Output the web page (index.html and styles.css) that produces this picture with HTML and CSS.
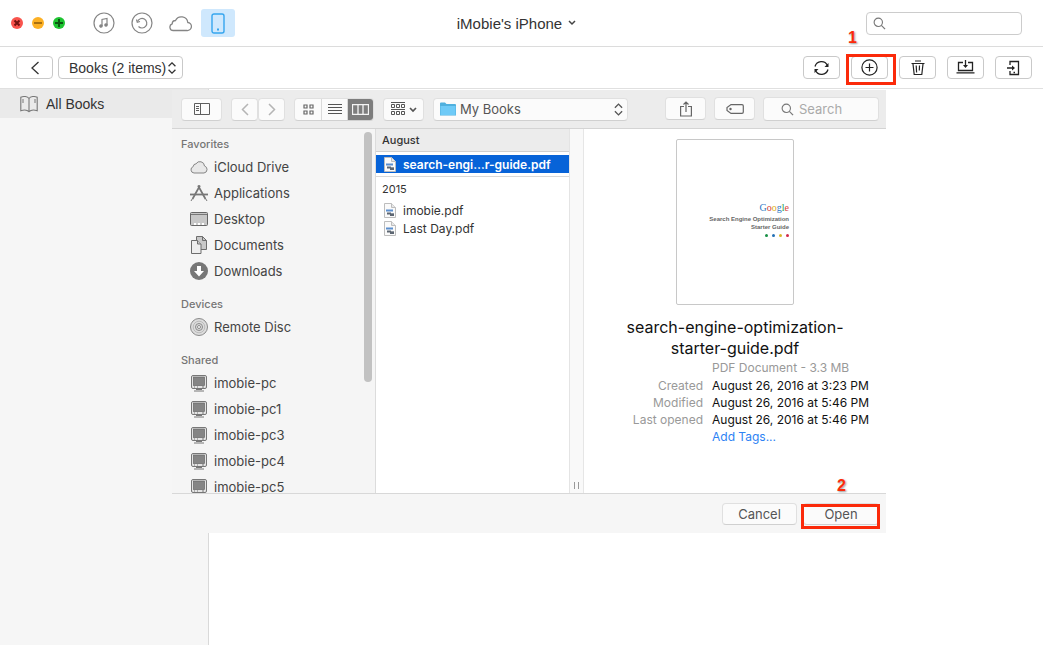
FILE: index.html
```html
<!DOCTYPE html>
<html lang="en">
<head>
<meta charset="utf-8">
<title>iMobie's iPhone</title>
<link rel="stylesheet" href="styles.css">
</head>
<body>
<svg class="defs" aria-hidden="true">
  <symbol id="pc" viewBox="0 0 18 18">
    <rect x="1.5" y="1.5" width="15" height="13" rx="1.5" fill="#e4e4e4" stroke="#777"/>
    <rect x="3.5" y="3" width="11" height="8.5" fill="#858585" stroke="#666" stroke-width=".7"/>
    <path d="M4 13h1M7 13h1M12 13h2" stroke="#777"/>
    <path d="M6 15.5h6M4 17h10" stroke="#777"/>
  </symbol>
  <symbol id="pdf" viewBox="0 0 12 15">
    <path d="M.5.5h7l4 4v10H.5z" fill="#fafafa" stroke="#bdbdbd"/>
    <path d="M7.500.5v4h4" fill="#e8e8e8" stroke="#bdbdbd"/>
    <path d="M2 7.500h7" stroke="#5b8fce" stroke-width="2"/>
    <path d="M3 10.500h4M6 12h4" stroke="#5d6672" stroke-width="2"/>
    <path d="M7 10.500h3" stroke="#8e959d"/>
  </symbol>
  <symbol id="lens" viewBox="0 0 14 14">
    <circle cx="5.700" cy="5.700" r="4.500" fill="none" stroke="#777" stroke-width="1.200"/>
    <path d="M9 9l4 4" stroke="#777" stroke-width="1.300"/>
  </symbol>
  <symbol id="updown" viewBox="0 0 10 14">
    <path d="M1 5l4-4 4 4M1 9l4 4 4-4" fill="none" stroke="currentColor" stroke-width="1.500"/>
  </symbol>
</svg>

<div class="app">
  <header class="titlebar">
    <div class="titlebar-left">
      <div class="lights">
        <button class="light close" aria-label="Close"><svg viewBox="0 0 12 12"><path d="M3.500 3.500l5 5M8.500 3.500l-5 5" stroke="#74120f" stroke-width="2"/></svg></button>
        <button class="light minimize" aria-label="Minimize"><svg viewBox="0 0 12 12"><path d="M2 6h8" stroke="#8d5b0b" stroke-width="1.500"/></svg></button>
        <button class="light maximize" aria-label="Zoom"><svg viewBox="0 0 12 12"><path d="M2 6h8M6 2v8" stroke="#0b5712" stroke-width="2"/></svg></button>
      </div>
      <nav class="modes" aria-label="Sources">
        <button class="mode" aria-label="Music"><svg width="22" height="22" viewBox="0 0 22 22" fill="none" stroke="#858585" stroke-width="1.200"><circle cx="11" cy="11" r="10"/><path d="M9 14V7.500l5-1V13"/><circle cx="8" cy="14" r="1.200" fill="#858585"/><circle cx="13" cy="13" r="1.200" fill="#858585"/></svg></button>
        <button class="mode" aria-label="History"><svg width="22" height="22" viewBox="0 0 22 22" fill="none" stroke="#858585" stroke-width="1.200"><circle cx="11" cy="11" r="10"/><path d="M6.500 9.500a4.800 4.800 0 1 1 1 5"/><path d="M5.500 7.500l.8 2.800 2.700-.8"/></svg></button>
        <button class="mode" aria-label="Cloud"><svg width="24" height="17" viewBox="0 0 24 17" fill="none" stroke="#858585" stroke-width="1.300"><path d="M5.500 15.500h13.500a4 4 0 0 0 .8-8A6.500 6.500 0 0 0 7.500 5.500a3.500 3.500 0 0 0-3.300 3.400A3.400 3.400 0 0 0 5.500 15.500z"/></svg></button>
        <button class="mode active" aria-label="Device"><svg width="14" height="21" viewBox="0 0 14 21" fill="none" stroke="#35a5ee" stroke-width="1.400"><rect x="1" y="1" width="12" height="19" rx="2"/><path d="M6 16.500h2" stroke-width="2"/></svg></button>
      </nav>
    </div>
    <button class="device-name">iMobie's iPhone <svg width="8" height="6" viewBox="0 0 8 6"><path d="M1 1l3 3 3-3" fill="none" stroke="#444" stroke-width="1.500"/></svg></button>
    <label class="field app-search"><svg width="13" height="13"><use href="#lens"/></svg><input type="search" aria-label="Search device"></label>
  </header>

  <div class="toolbar">
    <div class="tools-left">
      <button class="tool" aria-label="Back"><svg width="10" height="14" viewBox="0 0 10 14"><path d="M8.500 1L2 7l6.500 6" fill="none" stroke="#333" stroke-width="1.300"/></svg></button>
      <label class="picker category"><select aria-label="Category"><option>Books (2 items)</option></select><svg width="10" height="12"><use href="#updown"/></svg></label>
    </div>
    <div class="tools-right">
      <button class="tool" aria-label="Refresh"><svg width="17" height="16" viewBox="0 0 17 16" fill="none" stroke="#222" stroke-width="1.300"><path d="M2 6.500a6.700 6.700 0 0 1 12.500-1M15 9.500A6.700 6.700 0 0 1 2.500 10.500"/><path d="M15.500 3v4h-4zM1.500 13V9h4z" fill="#222" stroke="none"/></svg></button>
      <div class="marked">
        <button class="tool" aria-label="Add"><svg width="17" height="17" viewBox="0 0 17 17" fill="none" stroke="#222" stroke-width="1.200"><circle cx="8.500" cy="8.500" r="7.600"/><path d="M4.500 8.500h8M8.500 4.500v8"/></svg></button>
        <span class="mark mark-add"></span><span class="step step-add">1</span>
      </div>
      <button class="tool" aria-label="Delete"><svg width="14" height="16" viewBox="0 0 14 16" fill="none" stroke="#222" stroke-width="1.200"><path d="M.5 3.500h13M4 1h6M2 4l1.200 10.500h7.600L12 4M5.200 5.500l.4 7M8.500 5.500l-.2 5"/></svg></button>
      <button class="tool" aria-label="Save to computer"><svg width="19" height="15" viewBox="0 0 19 15" fill="none" stroke="#222" stroke-width="1.300"><path d="M7 2.500H2.500v8h14v-8H12M.5 12.800h18M9.500 0v7"/><path d="M7 5h5L9.500 8z" fill="#222" stroke="none"/></svg></button>
      <button class="tool" aria-label="Send to device"><svg width="13" height="16" viewBox="0 0 13 16" fill="none" stroke="#222" stroke-width="1.300"><path d="M3 5V1.500h8.500v13H3V11M0 8h7"/><path d="M5 5.500v5L8 8z" fill="#222" stroke="none"/><path d="M6.500 12.500h1.500"/></svg></button>
    </div>
  </div>

  <main class="workspace">
    <aside class="categories">
      <a class="category-link" href="#books"><svg width="18" height="18" viewBox="0 0 18 18" fill="none" stroke="#777" stroke-width="1.100"><path d="M9 3.500C7.500 1.500 3.500.8.800 2.200v13.500c2.800-1 6.500-.8 8.200 1 1.700-1.800 5.400-2 8.200-1V2.200C14.500.8 10.500 1.500 9 3.500zM9 3.500v13"/><path d="M3 4v4M15 4v4" stroke-width="1"/></svg>All Books</a>
    </aside>

    <section class="sheet" role="dialog" aria-label="Open file">
      <div class="sheet-bar">
        <button class="chip" aria-label="Toggle sidebar"><svg width="16" height="12" viewBox="0 0 16 12" fill="none" stroke="#5d5d5d"><path d="M.5.5h15v11H.5zM6.500.5v11M2 3.500h3M2 5.500h3M2 7.500h3"/></svg></button>
        <div class="pair">
          <button class="chip narrow" aria-label="Previous"><svg width="8" height="13" viewBox="0 0 8 13"><path d="M7 1L1.500 6.500 7 12" fill="none" stroke="#b5b5b5" stroke-width="1.500"/></svg></button>
          <button class="chip narrow" aria-label="Next"><svg width="8" height="13" viewBox="0 0 8 13"><path d="M1 1l5.500 5.500L1 12" fill="none" stroke="#b5b5b5" stroke-width="1.500"/></svg></button>
        </div>
        <div class="views">
          <button aria-label="Icon view"><svg width="11" height="11" viewBox="0 0 11 11" fill="none" stroke="#666" stroke-width="1.200"><path d="M1 1h3v3H1zM7 1h3v3H7zM1 7h3v3H1zM7 7h3v3H7z"/></svg></button>
          <button aria-label="List view"><svg width="14" height="11" viewBox="0 0 14 11" stroke="#555"><path d="M0 .5h14M0 3.500h14M0 6.500h14M0 9.500h14"/></svg></button>
          <button class="on" aria-label="Column view"><svg width="17" height="11" viewBox="0 0 17 11" fill="none" stroke="#f4f4f4"><path d="M.5.500h16v10H.5zM6 1v9M11 1v9" stroke-width="1.300"/></svg></button>
        </div>
        <button class="chip" aria-label="Arrange"><svg width="26" height="14" viewBox="0 0 26 14" fill="none" stroke="#555"><path d="M0 .5h14M0 7.500h14M.5 2.500h3v3h-3zM5.500 2.500h3v3h-3zM10.500 2.500h3v3h-3zM.5 9.500h3v3h-3zM5.500 9.500h3v3h-3zM10.500 9.500h3v3h-3z"/><path d="M19 6l3 3 3-3" stroke-width="1.700"/></svg></button>
        <label class="picker folder"><svg class="folder-icon" width="16" height="14" viewBox="0 0 16 14"><path d="M0 1.500Q0 .5 1 .5h4L6.500 2H15q1 0 1 1v10.500H0z" fill="#4fb0de"/><path d="M.5 4h15v9H.5z" fill="#6ecaf7"/></svg><select aria-label="Folder"><option>My Books</option></select><svg width="9" height="13"><use href="#updown"/></svg></label>
        <div class="sheet-actions">
          <button class="chip" aria-label="Share"><svg width="12" height="16" viewBox="0 0 12 16" fill="none" stroke="#666" stroke-width="1.200"><path d="M4 5.500H.6v9.500h10.800V5.500H8M6 11V1M3.500 3.500L6 1l2.500 2.500"/></svg></button>
          <button class="chip" aria-label="Tags"><svg width="18" height="10" viewBox="0 0 18 10" fill="none" stroke="#666" stroke-width="1.200"><path d="M5 .6h11q1.300 0 1.300 1.300v6.200q0 1.300-1.300 1.300H5L1 6.500V3.500z"/><circle cx="4.500" cy="5" r=".6"/></svg></button>
          <label class="field sheet-search"><svg width="13" height="13"><use href="#lens"/></svg><input type="search" placeholder="Search" aria-label="Search files"></label>
        </div>
      </div>

      <div class="browser">
        <nav class="places" aria-label="Places">
          <div class="place-group">
            <h3>Favorites</h3>
            <a href="#icloud"><svg width="18" height="18" viewBox="0 0 18 18"><path d="M4 15h10a3.600 3.600 0 0 0 .5-7A4.600 4.600 0 0 0 6 5.800 3 3 0 0 0 3.200 8.600 3.300 3.300 0 0 0 4 15z" fill="#e8e8e8" stroke="#858585"/></svg>iCloud Drive</a>
            <a href="#apps"><svg width="18" height="18" viewBox="0 0 18 18" fill="none" stroke="#777" stroke-width="1.700"><path d="M10 1.500L2.500 15M8 1.500L15.500 15"/><path d="M0 10.500h18" stroke-width="1.800"/><path d="M2.500 14.500L1 17M15.500 14.500L17 17" stroke-width="1"/></svg>Applications</a>
            <a href="#desktop"><svg width="18" height="18" viewBox="0 0 18 18"><rect x=".5" y="2.500" width="17" height="13" rx="1" fill="#c7c7c7" stroke="#666"/><path d="M1 4.500h16" stroke="#777"/><path d="M4 13h10v2H4z" fill="#fff"/><path d="M7 13v2M11 13v2" stroke="#999"/></svg>Desktop</a>
            <a href="#documents"><svg width="18" height="18" viewBox="0 0 18 18" stroke="#6d6d6d"><path d="M6.500.5h6l4 4v9h-10z" fill="#c8c8c8"/><path d="M12.500.5v4h4" fill="none"/><path d="M1.500 4.500h6l3.500 3.500v9.500H1.500z" fill="#eee"/><path d="M7.500 4.500V8H11" fill="#ccc"/></svg>Documents</a>
            <a href="#downloads"><svg width="18" height="18" viewBox="0 0 18 18"><circle cx="9" cy="9" r="9" fill="#777"/><path d="M7 4h4v5h3l-5 5.500L4 9h3z" fill="#fff"/></svg>Downloads</a>
          </div>
          <div class="place-group">
            <h3>Devices</h3>
            <a href="#disc"><svg width="18" height="18" viewBox="0 0 18 18" fill="none" stroke="#8a8a8a"><circle cx="9" cy="9" r="8.500" fill="#dcdcdc"/><circle cx="9" cy="9" r="5.800" stroke="#bbb"/><circle cx="9" cy="9" r="3.500"/><circle cx="9" cy="9" r="1.500" fill="#fff"/></svg>Remote Disc</a>
          </div>
          <div class="place-group">
            <h3>Shared</h3>
            <a href="#pc"><svg width="18" height="18"><use href="#pc"/></svg>imobie-pc</a>
            <a href="#pc1"><svg width="18" height="18"><use href="#pc"/></svg>imobie-pc1</a>
            <a href="#pc3"><svg width="18" height="18"><use href="#pc"/></svg>imobie-pc3</a>
            <a href="#pc4"><svg width="18" height="18"><use href="#pc"/></svg>imobie-pc4</a>
            <a href="#pc5"><svg width="18" height="18"><use href="#pc"/></svg>imobie-pc5</a>
          </div>
          <span class="scroll-thumb"></span>
        </nav>

        <div class="files">
          <h3 class="files-head">August</h3>
          <div class="files-section"><button class="file selected"><svg width="12" height="15"><use href="#pdf"/></svg>search-engi…r-guide.pdf</button></div>
          <h3 class="files-year">2015</h3>
          <button class="file"><svg width="12" height="15"><use href="#pdf"/></svg>imobie.pdf</button>
          <button class="file"><svg width="12" height="15"><use href="#pdf"/></svg>Last Day.pdf</button>
        </div>

        <div class="gutter"><span class="grip"></span></div>

        <article class="preview">
          <div class="page">
            <div class="logo"><span class="b">G</span><span class="r">o</span><span class="y">o</span><span class="b">g</span><span class="g">l</span><span class="r">e</span></div>
            <p>Search Engine Optimization<br>Starter Guide</p>
            <div class="dots"><i class="dot-g"></i><i class="dot-b"></i><i class="dot-y"></i><i class="dot-r"></i></div>
          </div>
          <h2>search-engine-optimization-starter-guide.pdf</h2>
          <dl class="meta">
            <dd class="kind">PDF Document - 3.3 MB</dd>
            <dt>Created</dt><dd>August 26, 2016 at 3:23 PM</dd>
            <dt>Modified</dt><dd>August 26, 2016 at 5:46 PM</dd>
            <dt>Last opened</dt><dd>August 26, 2016 at 5:46 PM</dd>
            <dd><a href="#tags">Add Tags...</a></dd>
          </dl>
        </article>
      </div>

      <footer class="sheet-foot">
        <button class="push">Cancel</button>
        <div class="marked">
          <button class="push">Open</button>
          <span class="mark mark-open"></span><span class="step step-open">2</span>
        </div>
      </footer>
    </section>
  </main>
</div>
</body>
</html>
```
FILE: styles.css
```css
* { box-sizing: border-box; }
body, h2, h3, p, dl, dd { margin: 0; }
body { font: 13px "Inter", sans-serif; color: #333; background: #fff; }
button, input, select { font: inherit; color: inherit; margin: 0; }
button { padding: 0; border: 0; background: none; }
a { color: inherit; text-decoration: none; }
svg { flex: none; display: block; }
.defs { position: absolute; width: 0; height: 0; }

.app { display: flex; flex-direction: column; height: 100vh; }

/* Title bar */
.titlebar { display: grid; grid-template-columns: 1fr auto 1fr; align-items: center; height: 47px; flex: none; padding: 0 21px 0 11px; border-bottom: 1px solid #dcdcdc; }
.titlebar-left { display: flex; align-items: center; gap: 22px; }
.lights { display: flex; gap: 9px; }
.light { width: 12px; height: 12px; border-radius: 50%; }
.close { background: #f9544d; }
.minimize { background: #fcb024; }
.maximize { background: #1ec431; }
.modes { display: flex; align-items: center; gap: 4px; }
.mode { display: flex; align-items: center; justify-content: center; width: 34px; height: 28px; border-radius: 3px; }
.active { background: #cfe8fd; }
.device-name { display: flex; align-items: center; gap: 6px; font: 15px "Liberation Sans", sans-serif; }
.field { display: flex; align-items: center; background: #fff; border: 1px solid #ccc; border-radius: 4px; }
.field input { flex: 1; min-width: 0; padding: 0; border: 0; outline: 0; background: none; }
.app-search { justify-self: end; width: 156px; height: 23px; gap: 6px; padding: 0 6px; }

/* Device toolbar */
.toolbar { display: flex; align-items: center; justify-content: space-between; height: 42px; flex: none; padding: 0 11px 0 16px; border-bottom: 1px solid #e0e0e0; }
.tools-left { display: flex; gap: 5px; }
.tools-right { display: flex; gap: 11px; }
.tool { display: flex; align-items: center; justify-content: center; width: 37px; height: 23px; border: 1px solid #c9c9c9; border-radius: 4px; background: #fff; }
.picker { display: flex; align-items: center; border-radius: 4px; background: #fff; }
.picker select { appearance: none; flex: 1; min-width: 0; padding: 0; border: 0; outline: 0; background: none; }
.category { width: 125px; height: 23px; padding: 0 5px 0 10px; border: 1px solid #c9c9c9; font: 14px "Liberation Sans", sans-serif; }

/* Red call-outs */
.marked { position: relative; }
.mark { position: absolute; border: 3px solid #fb2a0a; pointer-events: none; }
.mark-add { inset: -2px -8px -6px -5px; }
.mark-open { inset: 1px -1px -4px -2px; }
.step { position: absolute; font: bold 16px/18px "Liberation Sans", sans-serif; color: #fb2a0a; text-shadow: 1px 1px 2px #999; }
.step-add { left: -3px; top: -27px; }
.step-open { left: 34px; top: -26px; }

/* Workspace */
.workspace { position: relative; flex: 1; min-height: 0; display: flex; }
.categories { width: 209px; background: #f6f6f6; border-right: 1px solid #d9d9d9; }
.category-link { display: flex; align-items: center; gap: 8px; height: 29px; padding-left: 20px; background: #eaeaea; font: 14px "Liberation Sans", sans-serif; -webkit-text-stroke: 0; }

/* Open sheet */
.sheet { position: absolute; inset: 1px 157px 112px 172px; display: flex; flex-direction: column; background: #f6f6f6; }
.sheet-bar { display: flex; align-items: center; gap: 9px; height: 39px; flex: none; padding: 0 7px 0 9px; background: #ececec; border-bottom: 1px solid #d4d4d4; }
.chip, .views, .folder, .sheet-search, .push { border: 1px solid #e0e0e0; border-bottom-color: #d0d0d0; border-radius: 4px; background: #fbfbfb; }
.chip { display: flex; align-items: center; justify-content: center; width: 41px; height: 23px; }
.narrow { width: 27px; }
.pair { display: flex; }
.views { display: flex; height: 23px; overflow: hidden; }
.views button { display: flex; align-items: center; justify-content: center; width: 26px; }
.views button + button { border-left: 1px solid #dadada; }
.views .on { background: #7d7d7d; }
.folder { width: 195px; height: 23px; gap: 4px; padding: 0 4px 0 6px; color: #555; }
.sheet-actions { display: flex; gap: 8px; margin-left: auto; }
.sheet-search { width: 116px; height: 24px; gap: 5px; padding: 0 4px 0 17px; color: #777; }
.sheet-search input::placeholder { color: #aaa; opacity: 1; }

.browser { display: flex; flex: 1; min-height: 0; }
.places { position: relative; width: 204px; flex: none; overflow: hidden; padding-top: 5px; background: #f5f5f5; border-right: 1px solid #dcdcdc; }
.place-group { margin-bottom: 10px; }
.place-group h3 { padding-left: 9px; font-size: 11px; font-weight: 500; line-height: 20px; color: #757575; }
.place-group a { display: flex; align-items: center; gap: 6px; height: 26px; padding-left: 18px; color: #444; }
.scroll-thumb { position: absolute; top: 3px; right: 3px; width: 8px; height: 250px; border-radius: 4px; background: #c2c2c2; }

.files { width: 194px; flex: none; background: #fff; border-right: 1px solid #e4e4e4; color: #333; }
.files-head, .files-year { padding-left: 6px; font-size: 11px; line-height: 22px; }
.files-head { font-weight: 500; background: #ececec; border-bottom: 1px solid #cfcfcf; }
.files-year { font-weight: 400; line-height: 24px; }
.files-section { padding: 3px 0; border-bottom: 1px solid #d8d8d8; }
.file { display: flex; align-items: center; gap: 7px; width: 100%; height: 18px; padding-left: 8px; font-size: 12px; color: #333; }
.selected { background: #0763d8; color: #fff; font-weight: 600; }
.gutter { display: flex; align-items: flex-end; justify-content: center; width: 14px; flex: none; padding-bottom: 4px; background: #f9f9f9; border-right: 1px solid #e6e6e6; }
.grip { width: 5px; height: 7px; border: solid #999; border-width: 0 1px; }

.preview { flex: 1; min-width: 0; padding-top: 10px; background: #fff; color: #111; }
.page { display: flex; flex-direction: column; align-items: flex-end; width: 118px; height: 166px; margin: 0 auto; padding: 62px 4px 0; border: 1px solid #c8c8c8; border-radius: 2px; }
.logo { font: 10px/12px "Liberation Serif", serif; }
.b { color: #2f78c4; } .r { color: #d8403c; } .y { color: #e0b021; } .g { color: #2a9a4c; }
.page p { font: bold 6px/8px "Liberation Sans", sans-serif; color: #666; text-align: right; white-space: nowrap; margin-top: 1px; }
.dots { display: flex; gap: 4px; margin-top: 3px; }
.dots i { width: 3px; height: 3px; border-radius: 50%; }
.dot-g { background: #178f45; } .dot-b { background: #2270b5; } .dot-y { background: #d8b72a; } .dot-r { background: #d02a4b; }
.preview h2 { padding: 0 24px; margin-top: 12px; font-size: 16px; font-weight: 400; line-height: 21px; text-align: center; }
.meta { display: grid; grid-template-columns: 119px 1fr; column-gap: 9px; font-size: 12px; line-height: 17px; white-space: nowrap; }
.meta dt { text-align: right; color: #999; }
.meta dd { grid-column: 2; }
.meta .kind { color: #999; padding-bottom: 1px; }
.meta a { color: #2d82f4; }

.sheet-foot { display: flex; align-items: flex-start; justify-content: flex-end; gap: 6px; height: 40px; flex: none; padding: 9px 7px; border-top: 1px solid #d8d8d8; }
.push { display: block; width: 75px; height: 22px; color: #555; }
.marked .push { width: 76px; }
```
